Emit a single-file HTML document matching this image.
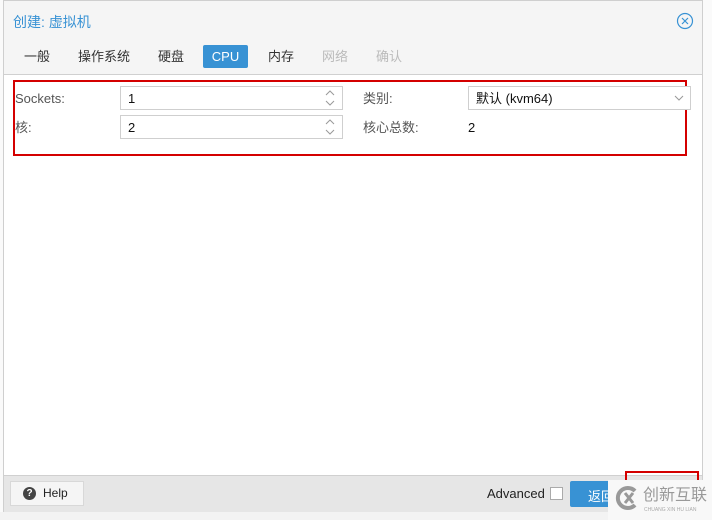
<!DOCTYPE html>
<html><head><meta charset="utf-8"><style>
html,body{margin:0;width:712px;height:520px;overflow:hidden}
body{background:#f0f0f0;font-family:"Liberation Sans","Noto Sans CJK SC",sans-serif;position:relative}
.a{position:absolute;white-space:nowrap}
.dlg{left:3px;top:0;width:700px;height:512px;background:#f5f5f5;border:1px solid #cfcfcf;box-sizing:border-box}
.tab{position:absolute;top:45px;height:23px;line-height:23px;font-size:13px;color:#333;padding:0 6px}
.lbl{font-size:13px;color:#555;line-height:16px}
.inp{border:1px solid #cfcfcf;background:#fff;box-sizing:border-box;font-size:13px;color:#111;padding-left:7px;line-height:23px}
</style></head><body>
<div class="a" style="left:0;top:0;width:712px;height:520px;background:#fafafa"></div>
<div class="a" style="left:0;top:512px;width:712px;height:8px;background:#f3f3f3"></div>
<div class="a dlg"></div>
<div class="a" style="left:13px;top:12px;font-size:14px;color:#3892d4">创建: 虚拟机</div>
<svg class="a" style="left:676px;top:12px" width="18" height="18" viewBox="0 0 18 18"><circle cx="9" cy="9" r="7.5" fill="none" stroke="#3892d4" stroke-width="1.2"/><path d="M6 6L12 12M12 6L6 12" stroke="#3892d4" stroke-width="1.2"/></svg>
<div class="tab" style="left:18px">一般</div>
<div class="tab" style="left:72px">操作系统</div>
<div class="tab" style="left:152px">硬盘</div>
<div class="tab" style="left:203px;width:33px;background:#3892d4;color:#fff;border-radius:2px;text-align:center">CPU</div>
<div class="tab" style="left:262px">内存</div>
<div class="tab" style="left:316px;color:#bbb">网络</div>
<div class="tab" style="left:370px;color:#bbb">确认</div>
<div class="a" style="left:4px;top:74px;width:698px;height:401px;background:#fff;border-top:1px solid #d0d0d0"></div>
<div class="a" style="left:13px;top:80px;width:670px;height:72px;border:2px solid #d40000"></div>
<div class="a lbl" style="left:15px;top:91px">Sockets:</div>
<div class="a inp" style="left:120px;top:86px;width:223px;height:24px">1</div>
<svg class="a" style="left:325px;top:89px" width="10" height="18" viewBox="0 0 10 18"><path d="M1 6L5 2L9 6M1 12L5 16L9 12" fill="none" stroke="#999" stroke-width="1"/></svg>
<div class="a lbl" style="left:15px;top:120px">核:</div>
<div class="a inp" style="left:120px;top:115px;width:223px;height:24px">2</div>
<svg class="a" style="left:325px;top:118px" width="10" height="18" viewBox="0 0 10 18"><path d="M1 6L5 2L9 6M1 12L5 16L9 12" fill="none" stroke="#999" stroke-width="1"/></svg>
<div class="a lbl" style="left:363px;top:91px">类别:</div>
<div class="a inp" style="left:468px;top:86px;width:223px;height:24px">默认 (kvm64)</div>
<svg class="a" style="left:674px;top:94px" width="10" height="8" viewBox="0 0 10 8"><path d="M1 2L5 6L9 2" fill="none" stroke="#999" stroke-width="1"/></svg>
<div class="a lbl" style="left:363px;top:120px">核心总数:</div>
<div class="a" style="left:468px;top:120px;font-size:13px;color:#111;line-height:16px">2</div>
<div class="a" style="left:4px;top:475px;width:698px;height:36px;background:#e6e6e6;border-top:1px solid #d0d0d0"></div>
<div class="a" style="left:10px;top:481px;width:74px;height:25px;background:#f5f5f5;border:1px solid #d8d8d8;box-sizing:border-box"></div>
<div class="a" style="left:23px;top:487px;width:13px;height:13px;border-radius:50%;background:#444;color:#fff;font-size:10px;font-weight:bold;text-align:center;line-height:13px">?</div>
<div class="a" style="left:43px;top:486px;font-size:12px;color:#222">Help</div>
<div class="a" style="left:487px;top:486px;font-size:13px;color:#222">Advanced</div>
<div class="a" style="left:550px;top:487px;width:13px;height:13px;border:1px solid #aaa;background:#fff;box-sizing:border-box"></div>
<div class="a" style="left:570px;top:481px;width:50px;height:26px;background:#3892d4;border-radius:2px"></div>
<div class="a" style="left:588px;top:486px;font-size:13px;color:#fff">返回</div>
<div class="a" style="left:625px;top:471px;width:70px;height:18px;border:2px solid #d40000;border-bottom:none"></div>
<div class="a" style="left:608px;top:480px;width:104px;height:40px;background:#f8f8f8"></div>
<svg class="a" style="left:613px;top:484px" width="28" height="28" viewBox="0 0 28 28"><path d="M22 7A10 10 0 1 0 22 21" fill="none" stroke="#999" stroke-width="4"/><path d="M12 9L20 19M20 9L12 19" stroke="#999" stroke-width="3"/></svg>
<div class="a" style="left:643px;top:487px;font-size:16px;line-height:18px;color:#999">创新互联</div>
<div class="a" style="left:644px;top:507px;font-size:5px;color:#aaa">CHUANG XIN HU LIAN</div>
</body></html>
